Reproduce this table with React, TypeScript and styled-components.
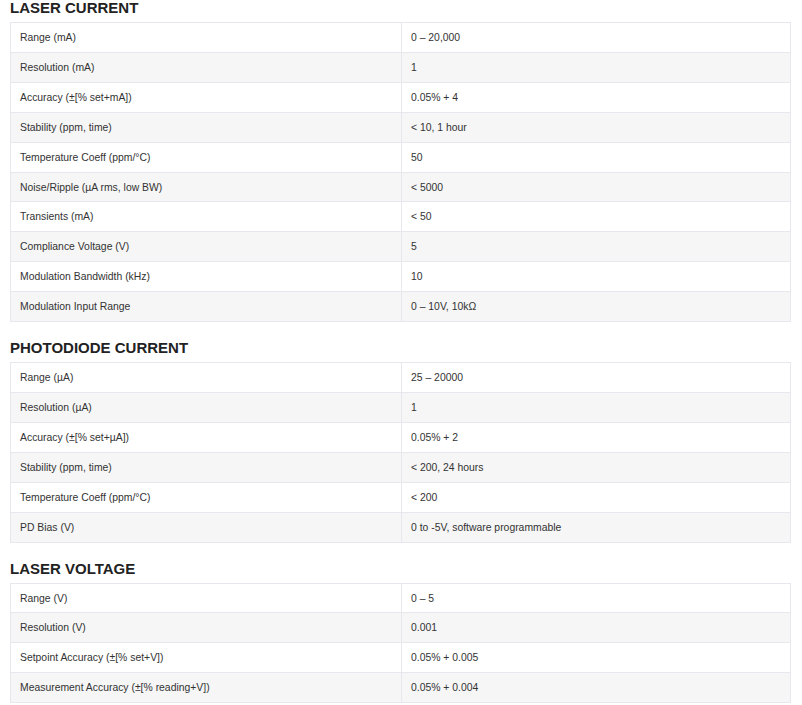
import React from 'react';
import styled, { createGlobalStyle } from 'styled-components';

const GlobalStyle = createGlobalStyle`
  body {
    margin: 0;
    background: #fff;
    font-family: 'Liberation Sans', Arial, sans-serif;
  }
`

const Page = styled.div`
  padding: 0 11px 0 10px;
  width: 781px;
`

const Heading = styled.h3`
  margin: 0 0 6px;
  font-size: 15px;
  line-height: 16px;
  font-weight: bold;
  color: #222;
  text-transform: uppercase;
`

const Table = styled.table`
  width: 100%;
  border-collapse: collapse;
  margin-bottom: 18px;
  table-layout: fixed;
`

const Row = styled.tr`
  background: #fff;

  &:nth-child(even) {
    background: #f6f6f6;
  }
`

const Cell = styled.td<{ $first?: boolean }>`
  width: ${p => (p.$first ? '372px' : 'auto')};
  border: 1px solid #e6e8ed;
  padding: 8px 9px 6px;
  font-size: 10.4px;
  line-height: 14.9px;
  color: #333;
  vertical-align: middle;
`

interface Section {
  title: string;
  rows: [string, string][];
}

const sections: Section[] = [
  {
    title: 'Laser Current',
    rows: [
      ['Range (mA)', '0 – 20,000'],
      ['Resolution (mA)', '1'],
      ['Accuracy (±[% set+mA])', '0.05% + 4'],
      ['Stability (ppm, time)', '< 10, 1 hour'],
      ['Temperature Coeff (ppm/°C)', '50'],
      ['Noise/Ripple (µA rms, low BW)', '< 5000'],
      ['Transients (mA)', '< 50'],
      ['Compliance Voltage (V)', '5'],
      ['Modulation Bandwidth (kHz)', '10'],
      ['Modulation Input Range', '0 – 10V, 10kΩ'],
    ],
  },
  {
    title: 'Photodiode Current',
    rows: [
      ['Range (µA)', '25 – 20000'],
      ['Resolution (µA)', '1'],
      ['Accuracy (±[% set+µA])', '0.05% + 2'],
      ['Stability (ppm, time)', '< 200, 24 hours'],
      ['Temperature Coeff (ppm/°C)', '< 200'],
      ['PD Bias (V)', '0 to -5V, software programmable'],
    ],
  },
  {
    title: 'Laser Voltage',
    rows: [
      ['Range (V)', '0 – 5'],
      ['Resolution (V)', '0.001'],
      ['Setpoint Accuracy (±[% set+V])', '0.05% + 0.005'],
      ['Measurement Accuracy (±[% reading+V])', '0.05% + 0.004'],
    ],
  },
]

export default function App() {
  return (
    <Page>
      <GlobalStyle />
      {sections.map(section => (
        <React.Fragment key={section.title}>
          <Heading>{section.title}</Heading>
          <Table>
            <tbody>
              {section.rows.map(([label, value]) => (
                <Row key={label}>
                  <Cell $first>{label}</Cell>
                  <Cell>{value}</Cell>
                </Row>
              ))}
            </tbody>
          </Table>
        </React.Fragment>
      ))}
    </Page>
  )
}
